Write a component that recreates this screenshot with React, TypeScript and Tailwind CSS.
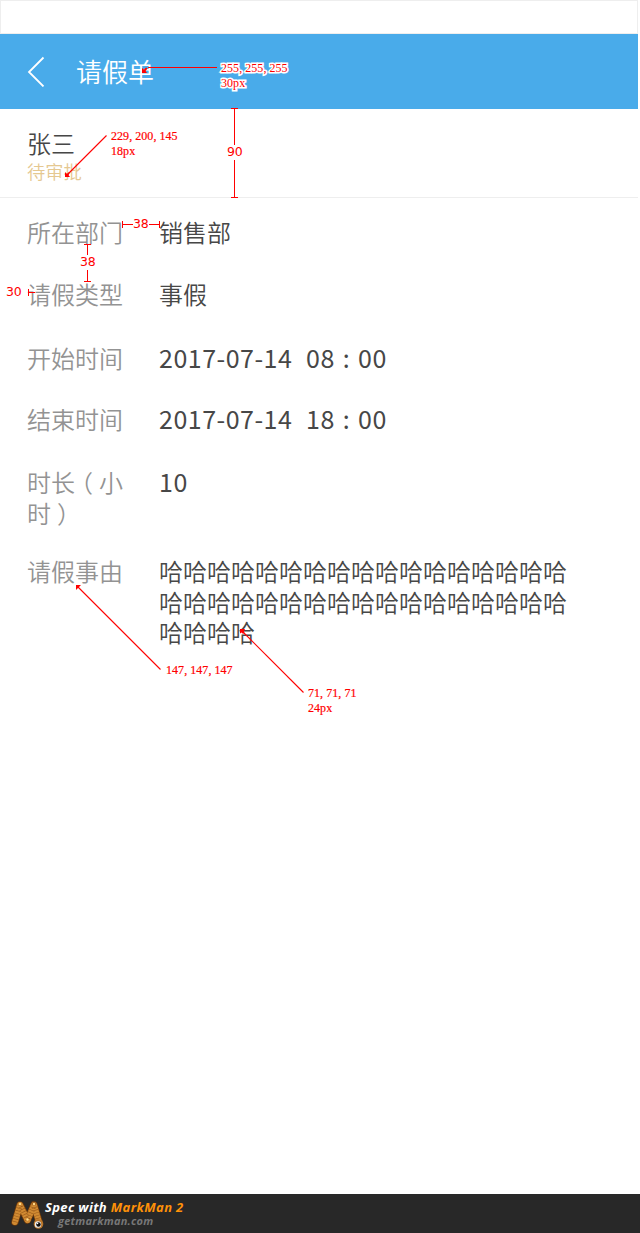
import type { ReactNode } from "react";

const RED = "#ff0000";

type RowProps = { label: ReactNode; height: string; children: ReactNode };

function Row({ label, height, children }: RowProps) {
  return (
    <div className={`flex ${height}`}>
      <dt className="w-[132px] shrink-0 whitespace-nowrap text-[#939393]">{label}</dt>
      <dd className="text-[#474747]">{children}</dd>
    </div>
  );
}

function DateTime({ date, hour, minute }: { date: string; hour: string; minute: string }) {
  return (
    <div className="flex text-[25px] leading-[29px] font-normal tracking-[0.5px]">
      <span className="w-[147px]">{date}</span>
      <span className="w-[29px]">{hour}</span>
      <span className="w-[23px] text-center">:</span>
      <span>{minute}</span>
    </div>
  );
}

function Paren({ children }: { children: string }) {
  return (
    <span className="inline-block w-[24px] text-center [font-feature-settings:'halt']">{children}</span>
  );
}

function Note({ place, lines, halo = false }: { place: string; lines: string[]; halo?: boolean }) {
  return (
    <div
      className={`absolute font-['Liberation_Serif',serif] text-[12px] leading-[15px] font-normal tracking-[0.05px] whitespace-nowrap text-[#ff0000] ${place} ${
        halo ? "[paint-order:stroke] [-webkit-text-stroke:3px_white]" : "[-webkit-text-stroke:0.2px_#ff0000]"
      }`}
    >
      {lines.map((l) => (
        <div key={l}>{l}</div>
      ))}
    </div>
  );
}

function Size({ place, value }: { place: string; value: string }) {
  return (
    <span className={`absolute font-['DejaVu_Sans',sans-serif] text-[12.5px] leading-[14px] font-normal tracking-[-0.1px] text-[#ff0000] ${place}`}>
      {value}
    </span>
  );
}

function Annotations() {
  return (
    <div className="pointer-events-none absolute inset-0">
      <svg width="640" height="1233" viewBox="0 0 640 1233" className="absolute inset-0" fill="none" stroke={RED}>
        <g shapeRendering="crispEdges">
          <path d="M148 67.5H217" />
          <path d="M231 108.5H238M234.5 108V145M234.5 160V198M231 197.5H238" />
          <path d="M122.5 221V228M123 224.5H133M149 224.5H159M159.5 221V228" />
          <path d="M84 244.5H91M87.5 244V255M87.5 270V282M84 281.5H91" />
          <path d="M28.5 289V296M29 292.5H35" />
        </g>
        <g strokeWidth="1.1">
          <path d="M106.500 135.500L67 175" />
          <path d="M160.500 669.500L78 587" />
          <path d="M303.500 692.500L242 631" />
        </g>
        <g fill={RED} stroke="none">
          <path d="M142 68V73H147L145.500 71L147.500 68.500L146 67.500L144 69.500Z" />
          <path d="M65 172V177H70L68.500 175L69.500 173.500L68.500 172.500L67 174Z" />
          <path d="M76 585H81L76 590Z" />
          <path d="M240 629H245L243.800 631.500L244.500 632.500L243 634L241.800 632.500L240 633.500Z" />
        </g>
      </svg>
      <Note place="left-[221px] top-[61px]" lines={["255, 255, 255", "30px"]} halo />
      <Note place="left-[111px] top-[129px]" lines={["229, 200, 145", "18px"]} />
      <Note place="left-[166px] top-[663px]" lines={["147, 147, 147"]} />
      <Note place="left-[308px] top-[686px]" lines={["71, 71, 71", "24px"]} />
      <Size place="left-[227px] top-[145px]" value="90" />
      <Size place="left-[133px] top-[217px]" value="38" />
      <Size place="left-[80px] top-[255px]" value="38" />
      <Size place="left-[6px] top-[285px]" value="30" />
    </div>
  );
}

function Logo() {
  return (
    <svg width="35" height="32" viewBox="0 0 35 32" fill="none" strokeLinecap="round" strokeLinejoin="round">
      <path d="M5 23L10 6L17.500 21L24 6L29 23" stroke="#6d390a" strokeWidth="7.500" />
      <path d="M5 23L10 6L17.500 21" stroke="#d08a32" strokeWidth="6" />
      <path d="M17.500 21L24 6L29 23" stroke="#d08a32" strokeWidth="6" />
      <path d="M5 23L10 6L17.500 21L24 6L29 23" stroke="#9a5b1b" strokeWidth="6" strokeDasharray="0.6 2.200" strokeLinecap="butt" />
      <g fill="#ffd988">
        <circle cx="10" cy="5" r="1.200" />
        <circle cx="24" cy="5" r="1.200" />
        <circle cx="17.500" cy="20.500" r="1.200" />
      </g>
      <circle cx="28.500" cy="25" r="4.800" fill="#b9762a" />
      <circle cx="28" cy="25.500" r="3.200" fill="#f0f0f0" />
      <circle cx="28.500" cy="25.500" r="2.200" fill="#111" />
      <circle cx="27.600" cy="24.500" r="0.700" fill="white" />
    </svg>
  );
}

export default function App() {
  return (
    <div className="relative flex h-[1233px] w-[640px] flex-col overflow-hidden bg-white font-['Noto_Sans_CJK_SC',sans-serif] font-[350]">
      <div className="h-[34px] w-[638px] shrink-0 border border-[#eeeeee]" />
      <header className="flex h-[75px] w-[638px] shrink-0 items-start bg-[#49abea] pt-[22px] pl-[27px] text-white">
        <svg width="18" height="31" viewBox="0 0 18 31" fill="none" stroke="white" strokeWidth="1.800">
          <path d="M16.500 1.500L2 16L16.500 30.500" />
        </svg>
        <h1 className="ml-[31px] text-[26px] leading-[29px] font-[350]">请假单</h1>
      </header>

      <section className="h-[89px] w-[638px] shrink-0 border-b border-[#eeeeee] pt-[19px] pl-[27px]">
        <div className="text-[24px] leading-[30px] text-[#474747]">张三</div>
        <div className="text-[18.300px] leading-[26px] text-[#e5c891]">待审批</div>
      </section>

      <dl className="flex grow flex-col pt-[19px] pl-[27px] text-[24px] leading-[30.500px]">
        <Row label="所在部门" height="h-[62px]">销售部</Row>
        <Row label="请假类型" height="h-[64px]">事假</Row>
        <Row label="开始时间" height="h-[61px]"><DateTime date="2017-07-14" hour="08" minute="00" /></Row>
        <Row label="结束时间" height="h-[63px]"><DateTime date="2017-07-14" hour="18" minute="00" /></Row>
        <Row label={<>时长<Paren>（</Paren>小<br />时<Paren>）</Paren></>} height="h-[89px]">
          <div className="text-[25px] leading-[29px] font-normal tracking-[0.5px]">10</div>
        </Row>
        <Row label="请假事由" height="h-[92px]">
          <p className="w-[410px] break-all">哈哈哈哈哈哈哈哈哈哈哈哈哈哈哈哈哈哈哈哈哈哈哈哈哈哈哈哈哈哈哈哈哈哈哈哈哈哈</p>
        </Row>
      </dl>

      <footer className="flex h-[39px] shrink-0 items-start bg-[#282828] pt-[5px] pl-[10px]">
        <Logo />
        <div className="font-['Open_Sans',sans-serif] font-bold whitespace-nowrap italic">
          <div className="text-[13px] leading-[17px] tracking-[0.36px] text-white">
            Spec with <span className="text-[#ff9108]">MarkMan 2</span>
          </div>
          <div className="pl-[13px] text-[11px] leading-[10px] tracking-[0.25px] text-[#777777]">getmarkman.com</div>
        </div>
      </footer>

      <Annotations />
    </div>
  );
}
